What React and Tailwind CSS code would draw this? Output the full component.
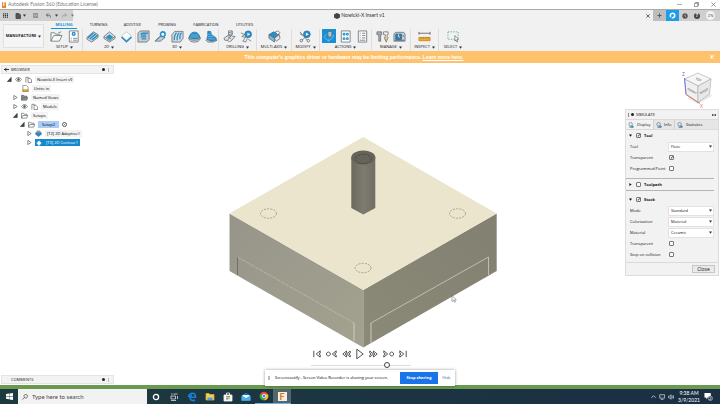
import React from "react";

const BLUE = "#2b8fc9";

function Svg({ children, className = "size-3.5", box = "0 0 14 14" }) {
  return (
    <svg viewBox={box} className={`shrink-0 ${className}`} fill="none" stroke="#5f676c" strokeWidth="0.8" aria-hidden="true">
      {children}
    </svg>
  );
}

const icons = {
  folder: <path d="M1 12V3h4l1 1.500h4V6M1 12l3-6h9l-3 6zM9 3l3-1" fill="#fbfbfb" />,
  sheet: (
    <>
      <path d="M2.500 1h9.500v12H2.500z" fill="#fff" />
      <circle cx="7.200" cy="4.200" r="1.500" stroke={BLUE} strokeWidth="1.500" />
      <path d="M4 9h1M6.500 9H11M4 11h1M6.500 11H11" />
    </>
  ),
  adaptive2d: (
    <>
      <path d="M1 8l7-6 5 3v3l-7 5-5-3z" fill="#cfd5d8" />
      <path d="M2 8.500l6-5.500M4 9.700l6.500-5.500M6.200 10.800L12.500 5.800" stroke={BLUE} strokeWidth="1.600" />
    </>
  ),
  pocket2d: (
    <>
      <path d="M1 7l6-5 6 5v2l-6 4-6-4z" fill="#dfe3e5" />
      <path d="M3.500 7.500L7 5l3.500 2.500L7 10.500z" fill={BLUE} stroke={BLUE} />
      <path d="M1 7l6 4.500L13 7" />
    </>
  ),
  contour2d: (
    <>
      <path d="M2 6l5-4 5 4-5 5z" fill="#fff" stroke="#b9bfc3" />
      <path d="M1.500 7.500l5.500 5 5.500-5" stroke={BLUE} strokeWidth="1.700" />
    </>
  ),
  adaptive3d: (
    <>
      <path d="M1 3.500L3.500 1H13v9.500L10.500 13H1z" fill="#c5cbcf" />
      <path d="M12 3.500H6c-2 0-2 2 0 2h4M10 7.500H4M10 9.500H5" stroke={BLUE} strokeWidth="1.400" />
    </>
  ),
  ramp: (
    <>
      <path d="M1 12l5-5h3l3 1-5 4z" fill="#c5cbcf" />
      <circle cx="9.500" cy="4.500" r="2.500" fill="#fff" stroke={BLUE} strokeWidth="1.700" />
      <path d="M2 11.500l5-4" stroke={BLUE} />
    </>
  ),
  parallel: (
    <>
      <path d="M1 5l3-3.500h9V9l-3 4H1z" fill="#d5dadd" />
      <path d="M3.500 11c0-4 1-7 2.500-8M6.500 11c0-4 1-7 2.500-8M9.500 10c0-3 .5-6 2-7" stroke={BLUE} strokeWidth="1.400" />
    </>
  ),
  scallop: (
    <>
      <path d="M.8 8.500C1 12 4 13 7 13s6-1 6.200-4.500z" fill="#d3d8db" />
      <ellipse cx="7" cy="8.500" rx="6.200" ry="2.500" fill="#e6e9eb" />
      <path d="M1.500 8.300c0-8 11-8 11 0-2 2-9 2-11 0z" fill={BLUE} stroke="#1b6fa3" />
      <path d="M3 5.500h8M2 7.500h10" stroke="#8cc4e6" strokeWidth="0.600" />
    </>
  ),
  spiral: (
    <>
      <path d="M1 11l5-2 7 2-4 2H3z" fill="#c5cbcf" />
      <path d="M3 1.500h3l1 3.500 5 3.500v2l-5 1.500-5-2 1-4z" fill={BLUE} stroke="#1b6fa3" />
      <path d="M3 4.500h4M3 7h6M2.500 9.500h9" stroke="#8cc4e6" strokeWidth="0.600" />
    </>
  ),
  drill: (
    <>
      <path d="M1 9l4-3 8 1-4 4.500-7-.5z" fill="#dfe3e5" />
      <path d="M6 1h4v4l-2 1-2-1zM5 7l4 3M9 6l-4 5 2 2 2-2" fill="#f4f4f4" />
      <path d="M6 3l4-1M6 5l4-1" />
    </>
  ),
  drillBlue: (
    <>
      <circle cx="8.800" cy="4.600" r="3.600" fill={BLUE} stroke="#1b6fa3" />
      <path d="M8 3l3 1.500L8 6.500z" fill="#fff" stroke="none" />
      <path d="M1 3l4 2-3 2 4 1-3 4 3 1 2-4" />
      <path d="M9 10l3 2" />
    </>
  ),
  multi: (
    <>
      <path d="M1 5l5-3 6 3-5 4z" fill={BLUE} stroke="#1b6fa3" />
      <path d="M1 5l6 4v4L1 9z" fill="#7fb8dc" />
      <path d="M7 9l5-4 1 4-4 3z" fill="#e9ecee" />
      <path d="M8 2l3-1 2 2-3 2z" fill="#fff" />
    </>
  ),
  modify: (
    <>
      <circle cx="8.500" cy="4.600" r="3.600" fill={BLUE} stroke="#1b6fa3" />
      <path d="M7.500 3l3 1.500-3 2z" fill="#fff" stroke="none" />
      <path d="M1 2l8 9M3 11l6-5M1 4l3 2" />
      <circle cx="2.500" cy="11.500" r="1.400" />
      <circle cx="10" cy="11.500" r="1.400" />
    </>
  ),
  simulate: (
    <>
      <path d="M2 7l5 5 5-4V5" stroke="#8fd0f4" />
      <path d="M2 7l4-3M7 12V9" stroke="#5fb8e8" />
      <path d="M6.500 1.500h4v5l-2 1.500-2-1.500z" fill="#d8dee1" stroke="#53656f" />
      <path d="M8.500 1.500v6" stroke="#8a979e" />
    </>
  ),
  g1g2: (
    <>
      <path d="M2.500 1h9.500v12H2.500z" fill="#fff" />
      <circle cx="5.400" cy="4.500" r="1" stroke={BLUE} strokeWidth="1.200" />
      <circle cx="9" cy="4.500" r="1" stroke={BLUE} strokeWidth="1.200" />
      <circle cx="5.400" cy="9.300" r="1" stroke={BLUE} strokeWidth="1.200" />
      <circle cx="9" cy="9.300" r="1" stroke={BLUE} strokeWidth="1.200" />
    </>
  ),
  setupSheet: (
    <>
      <path d="M2.500 1h9v12h-9z" fill="#fbfbfb" />
      <path d="M4 3.500h1M6.500 3.500H10M4 6h1M6.500 6H10M4 8.500h1M6.500 8.500H10M4 11h6" />
    </>
  ),
  toolLib: (
    <>
      <path d="M1 2h5v3H5v7H3V5H1z" fill="#aab1b5" />
      <path d="M8 2h5v3h-1v2l1 1-2 5-2-5 1-1V5H8z" fill="#f4f1ea" />
      <path d="M9 8h3M9 10h3" stroke="#d08a28" />
    </>
  ),
  machine: (
    <>
      <path d="M1 4.500l1.500-2h9L13 4.500V12H1z" fill="#c3d2dc" />
      <path d="M3 4.500h6V10H3z" fill="#2e86bf" stroke="#29506b" />
      <path d="M6 4.500V7l1.500 1" stroke="#fff" />
      <path d="M11 5.500v2M2 11h10" stroke="#3f5360" />
    </>
  ),
  measure: (
    <>
      <path d="M1 3.500h12M1 2v3M13 2v3" stroke="#4a4f52" />
      <path d="M1 8h12v3.500H1z" fill="#f0ab2e" stroke="#c47e12" />
      <path d="M3.500 8v1.500M6 8v1.500M8.500 8v1.500M11 8v1.500" stroke="#8a560c" strokeWidth="0.500" />
    </>
  ),
  select: (
    <>
      <path d="M1 2h11v8H1z" stroke="#49a98c" strokeDasharray="1.600 1.200" />
      <path d="M8.500 6l4 4-1.800.2 1 2.300-1 .5-1-2.300-1.200 1.200z" fill="#fff" stroke="#444" strokeWidth="0.600" />
    </>
  ),
};

const tabs = [
  ["MILLING", "w-[34px]"],
  ["TURNING", "w-[35px]"],
  ["ADDITIVE", "w-[33px]"],
  ["PROBING", "w-9"],
  ["FABRICATION", "w-[42px]"],
  ["UTILITIES", "w-[35px]"],
];

const groups = [
  ["SETUP", "w-9", ["folder", "sheet"]],
  ["2D", "w-[53px]", ["adaptive2d", "pocket2d", "contour2d"]],
  ["3D", "w-[83px]", ["adaptive3d", "ramp", "parallel", "scallop", "spiral"]],
  ["DRILLING", "w-[38px]", ["drill", "drillBlue"]],
  ["MULTI-AXIS", "w-[35px]", ["multi"]],
  ["MODIFY", "w-7", ["modify"]],
  ["ACTIONS", "w-[52px]", ["simulate", "g1g2", "setupSheet"]],
  ["MANAGE", "w-[39px]", ["toolLib", "machine"]],
  ["INSPECT", "w-7", ["measure"]],
  ["SELECT", "w-7", ["select"]],
];

function Caret() {
  return (
    <svg viewBox="0 0 4 4" className="size-[3px] shrink-0" aria-hidden="true">
      <path d="M0 0.500h4L2 3.500z" fill="#333" />
    </svg>
  );
}

function TitleBar() {
  return (
    <header className="flex h-2.5 shrink-0 items-center border-b border-[#a9a9a9] bg-white pl-0.5">
      <span className="flex h-1.5 w-1 items-center justify-center bg-[#e8872e] text-[5px] font-bold leading-none text-white">F</span>
      <h1 className="ml-[2px] flex-1 font-['Lato',sans-serif] text-[5px] leading-none text-[#7a7a7a]">Autodesk Fusion 360 (Education License)</h1>
      <div className="flex items-center gap-3 pr-1">
        <button aria-label="Minimize" className="flex"><Svg className="size-[5px]" box="0 0 6 6"><path d="M0 3h6" stroke="#888" /></Svg></button>
        <button aria-label="Restore" className="flex"><Svg className="size-[5px]" box="0 0 6 6"><path d="M.5 1.500h4v4h-4zM2 1.500V.5h3.500V4H4.500" stroke="#666" /></Svg></button>
        <button aria-label="Close" className="flex"><Svg className="size-[5px]" box="0 0 6 6"><path d="M.5.5l5 5M5.500.5l-5 5" stroke="#666" /></Svg></button>
      </div>
    </header>
  );
}

function DocumentBar() {
  return (
    <div className="flex h-[11px] shrink-0 bg-[#f1f1f1]">
      <div className="flex w-[73px] items-center bg-[#cfcfcf] pl-[3px]">
        <button aria-label="Data panel" className="flex"><Svg className="size-[5px]" box="0 0 6 6"><path d="M0 1h6M0 3h6M0 5h6" stroke="#333" strokeWidth="1.400" strokeDasharray="1.400 .9" /></Svg></button>
        <button aria-label="File" className="ml-[7px] flex items-center gap-[2px]"><Svg className="size-1.5" box="0 0 6 6"><path d="M1 .5h3l1.500 1.500v3.500H1z" fill="#555" stroke="#444" /></Svg><Caret /></button>
        <button aria-label="Save" className="ml-[7px] flex"><Svg className="size-[5px]" box="0 0 6 6"><path d="M.5.5h5v5h-5zM2 .5v2h2v-2M1.500 5.500V4h3v1.500" stroke="#777" /></Svg></button>
        <button aria-label="Undo" className="ml-2 flex items-center gap-1"><Svg className="size-[5px]" box="0 0 6 6"><path d="M2.500.5L.5 2.500l2 2M.5 2.500h3c2 0 2 1.500 2 3" stroke="#555" strokeWidth="1" /></Svg><Caret /></button>
        <button aria-label="Redo" className="ml-1 flex items-center gap-1 opacity-60"><Svg className="size-[5px]" box="0 0 6 6"><path d="M3.500.5l2 2-2 2M5.500 2.500h-3c-2 0-2 1.500-2 3" stroke="#777" strokeWidth="1" /></Svg><Caret /></button>
      </div>
      <div className="flex flex-1 items-center">
        <div className="flex flex-1 items-center justify-center gap-px font-['Lato',sans-serif] text-[5px] leading-none text-[#333]">
          <Svg className="size-1.5" box="0 0 6 6"><path d="M.5 1.500L3 .5l2.500 1v3L3 5.500l-2.500-1z" fill="#444" stroke="#333" /></Svg>
          Nowicki-X Insert v1
        </div>
        <button aria-label="Close tab" className="mr-[3px] flex"><Svg className="size-1" box="0 0 6 6"><path d="M.5.5l5 5M5.500.5l-5 5" stroke="#444" strokeWidth="1.200" /></Svg></button>
      </div>
      <div className="flex w-[67px] items-center bg-[#cfcfcf]">
        <button aria-label="New tab" className="flex h-full w-[13px] items-center justify-center bg-[#bdbdbd]"><Svg className="size-[5px]" box="0 0 6 6"><path d="M3 .5v5M.5 3h5" stroke="#555" strokeWidth="1.100" /></Svg></button>
        <button aria-label="Extensions" className="flex h-full w-[13px] items-center justify-center bg-[#1a9fe6]"><Svg className="size-[7px]" box="0 0 8 8"><circle cx="4" cy="4" r="2.500" stroke="#fff" strokeWidth="1.800" /><path d="M4 4L2 7" stroke="#1a9fe6" strokeWidth="1.200" /></Svg></button>
        <button aria-label="Job status" className="ml-[3px] flex"><Svg className="size-1.5" box="0 0 8 8"><circle cx="4" cy="4" r="3.600" fill="#555" stroke="none" /><path d="M4 2v2l1.500 1" stroke="#ddd" /></Svg></button>
        <button aria-label="Help" className="ml-1.5 flex size-1.5 items-center justify-center rounded-full bg-[#444] text-[5px] font-bold leading-none text-white">?</button>
        <button aria-label="Account" className="ml-1.5 flex size-[9px] items-center justify-center rounded-full bg-[#f3f3f3] text-[4px] leading-none text-[#555]">ZN</button>
      </div>
    </div>
  );
}

function Ribbon() {
  return (
    <div className="flex h-[30px] shrink-0 bg-[#f1f1f1]">
      <button className="m-[3px] flex w-[41px] shrink-0 items-center justify-center gap-[2px] border border-[#e0e0e0] bg-[#f5f5f5] text-[4px] font-bold leading-none text-[#222]">
        MANUFACTURE <Caret />
      </button>
      <div className="flex flex-1 flex-col">
        <nav className="flex h-2">
          {tabs.map(([name, width], i) => (
            <div key={name} className={`flex justify-center ${width}`}>
              <button className={`h-2 whitespace-nowrap border-b px-1 text-[4px] leading-none ${i === 0 ? "border-[#1a94d6] font-bold text-[#1a94d6]" : "border-transparent text-[#111]"}`}>{name}</button>
            </div>
          ))}
        </nav>
        <div className="flex">
          {groups.map(([name, width, list]) => (
            <section key={name} className={`flex flex-col items-center border-r border-[#dedede] last:border-r-0 ${width}`}>
              <div className="flex gap-[3px]">
                {list.map((id) => (
                  <button key={id} aria-label={id} className={`flex size-3.5 items-center justify-center ${id === "simulate" ? "bg-[#1a8fd1]" : ""}`}>
                    <Svg className="size-[13px]">{icons[id]}</Svg>
                  </button>
                ))}
              </div>
              <button className="flex h-2 items-center gap-[2px] whitespace-nowrap text-[4px] leading-none text-[#111]">
                {name} <Caret />
              </button>
            </section>
          ))}
        </div>
      </div>
    </div>
  );
}

function Banner() {
  return (
    <div className="flex h-3 shrink-0 items-center bg-[#ffc26c] font-['Liberation_Sans',sans-serif] text-[5px] font-bold leading-none text-white">
      <p className="flex-1 pl-1 text-center">
        This computer&apos;s graphics driver or hardware may be limiting performance. <a href="#learn" className="underline">Learn more here.</a>
      </p>
      <button aria-label="Dismiss" className="flex w-4 justify-center"><Svg className="size-1" box="0 0 6 6"><path d="M.5.5l5 5M5.500.5l-5 5" stroke="#fff" strokeWidth="1.600" /></Svg></button>
    </div>
  );
}

function Tri({ open }) {
  return (
    <Svg className="size-[5px]" box="0 0 6 6">
      {open ? <path d="M5 .5v5H.5z" fill="#444" stroke="#333" /> : <path d="M1 .5L5 3 1 5.500z" fill="#fff" stroke="#555" />}
    </Svg>
  );
}
const Eye = () => <Svg className="size-[7px]" box="0 0 8 8"><path d="M.5 4c2-3 5-3 7 0-2 3-5 3-7 0z" /><circle cx="4" cy="4" r="1.200" fill="#555" /></Svg>;
const Doc = () => <Svg className="size-[7px]" box="0 0 8 8"><path d="M1 7.500V1.500h2.500L5 3M3.500 7.500v-5h2l2 2v3z" fill="#fff" /></Svg>;
const Folder = ({ fill = "#fff" }) => <Svg className="size-[7px]" box="0 0 8 8"><path d="M.5 7V1.500h2.500l.8 1h3V4M.5 7L2 4h5.700L6.500 7z" fill={fill} /></Svg>;
const Ruler = () => <Svg className="size-[7px]" box="0 0 8 8"><path d="M1 .5h4l2 2v5H1z" fill="#fff" stroke="#777" /><path d="M1 5.500h6v2H1z" fill="#f0b030" stroke="#b98420" /></Svg>;

function TreeRow({ indent, open, children, label }) {
  return (
    <li className={`flex h-[9px] items-center gap-[3px] ${indent}`}>
      {open !== undefined && <Tri open={open} />}
      {children}
      <span className="whitespace-nowrap bg-[#f3f3f3] px-0.5 py-px text-[4px] leading-[5px] text-black">{label}</span>
    </li>
  );
}

function PanelHeader({ title, arrow }) {
  return (
    <div className="flex h-[9px] w-[113px] items-center border border-[#e4e4e4] bg-[#f3f3f3] pl-0.5 pr-1 text-[4px] leading-none text-[#222]">
      <span className="w-[7px]">{arrow && <Svg className="size-[5px]" box="0 0 6 6"><path d="M0 3h6M3 1L1 3l2 2" stroke="#333" strokeWidth="1.200" /></Svg>}</span>
      <h2 className="flex-1">{title}</h2>
      <button aria-label={`${title} options`} className="mr-[3px] size-[3px] rounded-full bg-[#222]" />
      <span className="h-1 border-r border-[#bbb]" />
    </div>
  );
}

function Browser() {
  return (
    <aside className="flex flex-col justify-between pb-px pt-0.5 pl-px">
      <div>
        <PanelHeader title="BROWSER" arrow />
        <ul className="pt-px">
          <TreeRow indent="pl-1.5" open label="Nowicki-X Insert v9"><Eye /><Doc /></TreeRow>
          <TreeRow indent="pl-[21px]" label="Units: in"><Ruler /></TreeRow>
          <TreeRow indent="pl-3" open={false} label="Named Views"><Folder fill="#8f8f8f" /></TreeRow>
          <TreeRow indent="pl-3" open={false} label="Models"><Eye /><Doc /></TreeRow>
          <TreeRow indent="pl-3" open label="Setups"><Folder /></TreeRow>
          <li className="flex h-[9px] items-center gap-[3px] pl-[19px]">
            <Tri open /><Folder />
            <span className="bg-[#a9cdf6] px-1 py-px text-[4px] leading-[5px] text-black">Setup2</span>
            <input type="radio" aria-label="Active setup" defaultChecked className="size-[5px] appearance-none rounded-full border border-[#555] bg-[#555] bg-clip-content p-px" />
          </li>
          <TreeRow indent="pl-[26px]" open={false} label="[T2] 2D Adaptive1">
            <Svg className="size-[7px]" box="0 0 8 8"><path d="M1 4c0-4 6-4 6 0z" fill="#a5aeb4" /><path d="M.5 4.500L4 3l3.500 1.500L4 7.500z" fill={BLUE} stroke="#1b6fa3" /></Svg>
          </TreeRow>
          <li className="flex h-[9px] items-center gap-[3px] pl-[26px]">
            <Tri open={false} />
            <span className="flex h-[7px] items-center gap-1 bg-[#148acb] pl-px pr-0.5 text-[4px] leading-none text-white">
              <Svg className="size-[6px]" box="0 0 8 8"><path d="M4 1l3 3-3 3.500L1 4z" fill="#fff" stroke="#d7ecf8" /></Svg>
              <span className="whitespace-nowrap">[T3] 2D Contour1</span>
            </span>
          </li>
        </ul>
      </div>
      <PanelHeader title="COMMENTS" />
    </aside>
  );
}

function Model() {
  return (
    <svg viewBox="229 137 268 211" className="h-[211px] w-[268px] shrink-0" role="img" aria-label="Stock block with tool">
      <defs>
        <linearGradient id="left" x1="0" y1="0" x2="1" y2="1">
          <stop offset="0" stopColor="#97958a" />
          <stop offset="1" stopColor="#a3a28f" />
        </linearGradient>
        <linearGradient id="right" x1="0" y1="1" x2="1" y2="0">
          <stop offset="0" stopColor="#8b8977" />
          <stop offset="1" stopColor="#828071" />
        </linearGradient>
        <linearGradient id="tool" x1="0" x2="1">
          <stop offset="0" stopColor="#6b695f" />
          <stop offset="0.5" stopColor="#7d7a6e" />
          <stop offset="1" stopColor="#716f64" />
        </linearGradient>
      </defs>
      <path d="M229.500 213.500L363.300 290v57.500L229.500 271z" fill="url(#left)" />
      <path d="M496.700 213.500L363.300 290v57.500L496.700 271z" fill="url(#right)" />
      <path d="M363.300 137l133.400 76.500L363.300 290l-133.800-76.500z" fill="#eae5cc" />
      <g fill="none" stroke="#8a887c" strokeWidth="0.700" strokeDasharray="2 1.200">
        <ellipse cx="268.500" cy="213.500" rx="8" ry="4.700" />
        <ellipse cx="457.500" cy="213.500" rx="8" ry="4.700" />
        <ellipse cx="363" cy="268" rx="8" ry="4.700" />
      </g>
      <path d="M237.500 275v-18" stroke="#68665b" strokeWidth="0.800" />
      <path d="M237.500 257L354 323" stroke="#c9c7b2" strokeWidth="0.600" strokeDasharray="4 1" />
      <path d="M354 323v18M371 343.500V323" stroke="#d6d3bd" strokeWidth="0.900" />
      <path d="M371 323l117.500-66v18" fill="none" stroke="#cfcdb8" strokeWidth="0.800" />
      <path d="M351.300 157v51l12 6.500 12-6.500v-51z" fill="url(#tool)" />
      <ellipse cx="363.300" cy="157.500" rx="12" ry="7" fill="#65635a" />
      <ellipse cx="363.300" cy="159" rx="8" ry="4.700" fill="none" stroke="#35342f" strokeWidth="0.700" strokeDasharray="1.500 1" />
      <path d="M452 295.500v6l1.500-1.200 1 2 .9-.4-.9-2h1.800z" fill="#fff" stroke="#555" strokeWidth="0.500" />
    </svg>
  );
}

const transport = [
  ["To start", "size-2", "0 0 10 10", "M1 1v8M9 1L4 5l5 4V6L7.500 5 9 4z"],
  ["Previous operation", "h-2 w-[11px]", "0 0 14 10", "M3 2.500a2.500 2.500 0 1 0 .1 0M13 1L8 5l5 4V6.500L11 5l2-1.500z"],
  ["Step back", "h-2 w-[9px]", "0 0 12 10", "M6 1L1 5l5 4V6.500L4 5l2-1.500zM11 1L6 5l5 4V6.500L9 5l2-1.500z"],
  ["Play", "h-3 w-2", "0 -2 10 14", "M1 -1v12l8-6z"],
  ["Step forward", "h-2 w-[9px]", "0 0 12 10", "M1 1l5 4-5 4V6.500L3 5 1 3.500zM6 1l5 4-5 4V6.500L8 5 6 3.500z"],
  ["Next operation", "h-2 w-[11px]", "0 0 14 10", "M1 1l5 4-5 4V6.500L3 5 1 3.500zM11 2.500a2.500 2.500 0 1 0 .1 0"],
  ["To end", "size-2", "0 0 10 10", "M9 1v8M1 1l5 4-5 4V6l1.500-1L1 4z"],
];

function Viewport() {
  return (
    <section className="flex flex-col items-center pr-[13px] pt-[74px]">
      <Model />
      <div className="flex h-[11px] items-center gap-[5px] pr-[7px]">
        {transport.map(([name, size, box, d]) => (
          <button key={name} aria-label={name} className="flex">
            <Svg className={size} box={box}><path d={d} fill="#fff" stroke="#3c3c3c" strokeWidth="1.100" /></Svg>
          </button>
        ))}
      </div>
      <input
        type="range"
        aria-label="Simulation position"
        defaultValue="78"
        className="mt-[3px] mr-1 h-1.5 w-[100px] appearance-none bg-[linear-gradient(#dedede,#dedede)] bg-[length:100%_1px] bg-center bg-no-repeat [&::-webkit-slider-thumb]:size-1.5 [&::-webkit-slider-thumb]:appearance-none [&::-webkit-slider-thumb]:rounded-full [&::-webkit-slider-thumb]:border [&::-webkit-slider-thumb]:border-[#444] [&::-webkit-slider-thumb]:bg-white"
      />
    </section>
  );
}

function ViewCube() {
  return (
    <svg viewBox="679 68 36 41" className="mr-[3px] h-[41px] w-9 self-end" role="img" aria-label="View cube">
      <path d="M686 98l11 6 14-8-4-4z" fill="#d9d9d9" opacity="0.600" />
      <path d="M683.500 79L697 73l13 6-13 7z" fill="#f6f6f6" stroke="#999" strokeWidth="0.500" />
      <path d="M683.500 79L697 86v16.500L685 94z" fill="#f0f0f0" stroke="#999" strokeWidth="0.500" />
      <path d="M710 79l-13 7v16.500L708.500 94z" fill="#e8e8e8" stroke="#999" strokeWidth="0.500" />
      <path d="M683.500 78l1.500 16.500" stroke="#5a5ad8" strokeWidth="0.800" />
      <path d="M685 94.500l14 9" stroke="#d05a5a" strokeWidth="0.800" />
      <g fill="#888" textAnchor="middle" className="text-[3px] font-bold">
        <text transform="translate(697 80.500) rotate(20)">TOP</text>
        <text transform="translate(690.500 92) rotate(28)">FRONT</text>
        <text transform="translate(703.500 92) rotate(-28)">RIGHT</text>
      </g>
      <text x="681" y="76" fill="#5a5ad8" className="text-[5px]">Z</text>
      <text x="699" y="108" fill="#e06a6a" className="text-[5px]">X</text>
    </svg>
  );
}

function Check({ id, checked, label }) {
  return (
    <input
      id={id}
      type="checkbox"
      aria-label={label}
      defaultChecked={checked}
      className="flex size-[5px] shrink-0 appearance-none items-center justify-center rounded-[1px] border border-[#777] bg-[#fafafa] before:text-[5px] before:font-bold before:leading-none before:text-[#333] checked:before:content-['✓']"
    />
  );
}

function Row({ id, label, value, checked }) {
  return (
    <div className="flex h-[11px] items-center">
      <label htmlFor={id} className="w-[38px] shrink-0 whitespace-nowrap">{label}</label>
      {value ? (
        <div className="relative flex flex-1">
          <select id={id} className="h-2.5 w-full appearance-none border border-[#e2e2e2] bg-white px-0.5 text-[4px] leading-none">
            <option>{value}</option>
          </select>
          <span className="pointer-events-none absolute inset-y-0 right-0.5 flex items-center"><Caret /></span>
        </div>
      ) : (
        <span className="flex pl-px"><Check id={id} checked={checked} /></span>
      )}
    </div>
  );
}

function Section({ title, open, checked }) {
  return (
    <h3 className="flex h-[11px] items-center gap-[3px] pl-[3px] font-bold leading-none">
      <svg viewBox="0 0 4 4" className="mr-px size-[3px]" aria-hidden="true"><path d={open ? "M0 .5h4L2 3.500z" : "M.5 0v4L3.500 2z"} fill="#111" /></svg>
      <Check checked={checked} label={title} />
      {title}
    </h3>
  );
}

const Bulb = () => <Svg className="size-1.5" box="0 0 8 8"><circle cx="3.500" cy="3" r="2.300" /><path d="M2.500 5.300v2h2v-2" /><circle cx="6" cy="6.300" r="1.200" fill={BLUE} stroke={BLUE} /></Svg>;

function Simulate() {
  return (
    <section className="border border-[#dcdcdc] bg-[#f2f2f2] text-[4px] leading-none text-[#111]">
      <div className="flex h-[9px] items-center gap-[2px] px-0.5">
        <span className="h-1 border-l border-[#888]" />
        <span className="size-[3px] rounded-full bg-[#222]" />
        <h2 className="flex-1">SIMULATE</h2>
        <Svg className="size-1" box="0 0 6 6"><path d="M0 3h6M1 1.500L0 3l1 1.500M5 1.500L6 3 5 4.500" stroke="#333" strokeWidth="1.200" /></Svg>
      </div>
      <div role="tablist" className="flex h-[11px] border-y border-[#dadada] bg-[#e6e6e6]">
        <button role="tab" aria-selected="true" className="flex w-[27px] items-center gap-[3px] bg-[#f2f2f2] pl-0.5"><Bulb />Display</button>
        <button role="tab" aria-selected="false" className="flex w-[21px] items-center gap-[2px] border-l border-[#d0d0d0] pl-0.5"><Bulb />Info</button>
        <button role="tab" aria-selected="false" className="flex flex-1 items-center gap-[3px] border-l border-[#d0d0d0] pl-0.5"><Bulb />Statistics</button>
      </div>
      <div className="pr-1">
        <div className="pb-1">
          <Section title="Tool" open checked />
          <div className="pl-1">
            <Row id="tool" label="Tool" value="Flute" />
            <Row id="tool-transparent" label="Transparent" checked />
            <Row id="tool-point" label="Programmed Point" />
          </div>
        </div>
        <div className="border-y border-[#b5b5b5]">
          <Section title="Toolpath" />
        </div>
        <div className="pb-0.5 pt-[3px]">
          <Section title="Stock" open checked />
          <div className="pl-1">
            <Row id="mode" label="Mode" value="Standard" />
            <Row id="colorization" label="Colorization" value="Material" />
            <Row id="material" label="Material" value="Ceramic" />
            <Row id="stock-transparent" label="Transparent" />
            <Row id="stop" label="Stop on collision" />
          </div>
        </div>
      </div>
      <div className="flex h-[13px] items-center justify-end border-t border-[#dadada] pr-[3px]">
        <button className="h-2 w-[23px] border border-[#c6c6c6] bg-[#e9e9e9] text-[5px] leading-none">Close</button>
      </div>
    </section>
  );
}

function ShareBar() {
  return (
    <div className="absolute bottom-[18px] left-1/2 flex h-4 w-[190px] -translate-x-1/2 items-center bg-white pl-[3px] text-[4px] leading-none text-black shadow-[0_0_3px_rgba(0,0,0,0.4)]">
      <span className="h-1 w-0.5 shrink-0 border-x border-[#bbb]" />
      <p className="flex-1 whitespace-nowrap pl-[5px]">Screencastify - Screen Video Recorder is sharing your screen.</p>
      <button className="h-3 w-[38px] shrink-0 whitespace-nowrap bg-[#1a73e8] font-bold text-white">Stop sharing</button>
      <button className="w-[17px] shrink-0 text-[#1f69a8]">Hide</button>
    </div>
  );
}

function TaskButton({ label, active, children }) {
  return (
    <button aria-label={label} className={`flex h-full w-[18px] items-center justify-center ${active || ""}`}>
      <Svg className="size-2.5" box="0 0 10 10">{children}</Svg>
    </button>
  );
}

function Taskbar() {
  return (
    <footer className="flex h-[15px] shrink-0 items-center bg-[linear-gradient(90deg,#1d3a40,#1b2f44)] font-['Lato',sans-serif] text-white">
      <button aria-label="Start" className="flex w-[18px] justify-center">
        <Svg className="size-[7px]" box="0 0 8 8"><path d="M0 1.200L3.600.7v3H0zM4 .6L8 0v3.700H4zM0 4.200h3.600v3L0 6.700zM4 4.200h4V8l-4-.6z" fill="#fff" stroke="none" /></Svg>
      </button>
      <div className="flex h-full w-[129px] items-center gap-1 bg-[#f2f2f2] pl-1">
        <Svg className="size-1.5" box="0 0 8 8"><circle cx="5" cy="3" r="2.400" stroke="#333" /><path d="M3.200 4.800L.5 7.500" stroke="#333" /></Svg>
        <input aria-label="Search" placeholder="Type here to search" className="min-w-0 flex-1 bg-transparent text-[6px] leading-none placeholder:text-[#444]" />
      </div>
      <div className="flex h-full flex-1">
        <TaskButton label="Cortana"><circle cx="5" cy="5" r="2.600" stroke="#fff" strokeWidth="1.300" /></TaskButton>
        <TaskButton label="Task view"><path d="M2 2h1.500M4.500 2h4M2 4h4.500v3H2zM8.500 4v3M2 8.500h5" stroke="#ddd" /></TaskButton>
        <TaskButton label="Edge"><path d="M1.500 5.200C2 2 4 1.300 5.300 1.300c2 0 3.200 1.500 3.200 3.900H3.700M8 8c-2 1.200-5 .6-5-2.500 0-1.300 1-2.300 2-2.600" stroke="#1780dd" strokeWidth="1.600" /></TaskButton>
        <TaskButton label="File Explorer"><path d="M1 1.500h3l1 1h4V8H1z" fill="#f5cf5c" stroke="#dba92f" /><path d="M2.500 5.500h5V8h-5z" fill="#4ba0dc" stroke="none" /></TaskButton>
        <TaskButton label="Store"><path d="M1 3h8v6H1z" fill="#f6f6f6" stroke="#f6f6f6" /><path d="M3.500 3V1h3v2" stroke="#f6f6f6" /><path d="M3.300 4h1.500v1.500H3.300z" fill="#e4572e" stroke="none" /><path d="M5.200 4h1.500v1.500H5.200z" fill="#3d8f3d" stroke="none" /><path d="M3.300 6h1.500v1.500H3.300z" fill="#2f86d6" stroke="none" /><path d="M5.200 6h1.500v1.500H5.200z" fill="#eab22e" stroke="none" /></TaskButton>
        <TaskButton label="Mail"><path d="M.5 3.500L5 .8l4.500 2.700v5h-9z" fill="#1c6fc0" stroke="none" /><path d="M.5 4L5 6.500 9.500 4v4.700h-9z" fill="#46b5ee" stroke="none" /><path d="M1.500 3h7v1.200L5 6.300 1.500 4.200z" fill="#eef6fb" stroke="none" /></TaskButton>
        <TaskButton label="Chrome" active="border-b border-[#6cb2e8]"><circle cx="5" cy="5" r="4.300" fill="#e9453a" stroke="none" /><path d="M5 5L1.200 2.900A4.300 4.300 0 0 0 5 9.300L7 6z" fill="#2da94f" stroke="none" /><path d="M5 9.300A4.300 4.300 0 0 0 9 3.400H5L7 6z" fill="#fbc116" stroke="none" /><circle cx="5" cy="5" r="1.800" fill="#3f7de8" stroke="#fff" /></TaskButton>
        <button aria-label="Fusion 360" className="flex h-full w-[18px] items-center justify-center border-b border-[#6cb2e8] bg-[#52666f]">
          <span className="flex size-[9px] items-center justify-center bg-[#f7eedf] text-[9px] font-bold leading-none text-[#d97a1c]">F</span>
        </button>
      </div>
      <div className="flex items-center gap-[3px] pr-[7px]">
        <Svg className="size-[5px]" box="0 0 6 6"><path d="M.5 4.500L3 2l2.500 2.500" stroke="#fff" /></Svg>
        <Svg className="size-1.5" box="0 0 8 8"><path d="M1 1h6.500v4.500H1zM2.500 7.500H6" stroke="#fff" /></Svg>
        <Svg className="size-1.5" box="0 0 8 8"><path d="M.5 3H2l2-2v6L2 5H.5zM5 2.500c1 1 1 2 0 3M6.500 1.500c1.500 1.500 1.500 3.500 0 5" stroke="#fff" /></Svg>
        <time className="w-6 text-center text-[5px] leading-[7px]">9:38 AM<br />3/9/2021</time>
        <button aria-label="Notifications" className="flex">
          <Svg className="size-[9px]" box="0 0 10 10"><path d="M.5 1h7v5H4L2.500 8V6h-2z" fill="#fff" stroke="none" /><circle cx="7" cy="7" r="2.500" fill="#21384a" stroke="#ddd" strokeWidth="0.600" /><text x="5.800" y="8.700" fill="#fff" stroke="none" className="text-[4px]">2</text></Svg>
        </button>
      </div>
    </footer>
  );
}

export default function App() {
  return (
    <div className="relative flex h-screen flex-col overflow-hidden bg-white font-['Open_Sans','Noto_Sans',sans-serif]">
      <TitleBar />
      <DocumentBar />
      <Ribbon />
      <Banner />
      <main className="grid min-h-0 flex-1 grid-cols-[114px_1fr_95px]">
        <Browser />
        <Viewport />
        <aside className="flex flex-col pr-px pt-[5px]">
          <ViewCube />
          <Simulate />
        </aside>
      </main>
      <div className="h-1 shrink-0 bg-[#699a50]" />
      <Taskbar />
      <ShareBar />
    </div>
  );
}
